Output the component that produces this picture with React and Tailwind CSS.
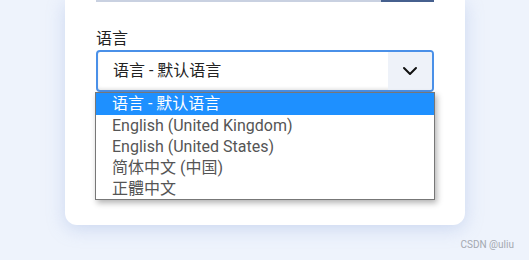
import React from 'react';

const options = [
  '语言 - 默认语言',
  'English (United Kingdom)',
  'English (United States)',
  '简体中文 (中国)',
  '正體中文',
];

export default function App() {
  return (
    <div className="relative h-[260px] w-[529px] overflow-hidden bg-[#eef3fc] font-['Roboto','Noto_Sans_CJK_SC',sans-serif]">
      <div className="ml-[65px] w-[400px] rounded-b-[12px] bg-white px-[31px] pb-[133px] shadow-[0_4px_18px_rgba(140,165,220,0.35)]">
        {/* bottom edge of the previous input */}
        <div className="flex h-[2px]">
          <div className="flex-1 bg-[#c9d1e1]" />
          <div className="w-[53px] bg-[#46608e]" />
        </div>

        <label className="mt-[26px] block text-[16px] leading-[22px] text-[#222]">语言</label>

        <div className="relative">
          <div className="flex h-[42px] w-[338px] overflow-hidden rounded-[4px] border-2 border-[#4a90e8] bg-white shadow-[inset_0_-2px_3px_rgba(0,0,0,0.08)]">
            <div className="flex flex-1 items-center pl-[15px] text-[16px] text-[#222]">
              语言 - 默认语言
            </div>
            <div className="flex w-[44px] items-center justify-center bg-[#eef2f9]">
              <svg width="16" height="10" viewBox="0 0 16 10" fill="none">
                <path d="M2 2l6 6 6-6" stroke="#111" strokeWidth="2" strokeLinecap="round" strokeLinejoin="round" />
              </svg>
            </div>
          </div>

          <ul className="absolute left-[-1px] top-[42px] w-[340px] border border-[#777] bg-white shadow-[2px_3px_6px_rgba(0,0,0,0.3)]">
            {options.map((o, i) => (
              <li
                key={o}
                className={`flex items-center pl-[16px] text-[16px] ${
                  i === 0 ? 'h-[22px] bg-[#1e90ff] text-white' : 'h-[21px] text-[#555]'
                }`}
              >
                {o}
              </li>
            ))}
          </ul>
        </div>
      </div>

      <div className="absolute bottom-[8px] right-[15px] text-[10px] text-[#a3a8b0]">
        CSDN @uliu
      </div>
    </div>
  );
}
